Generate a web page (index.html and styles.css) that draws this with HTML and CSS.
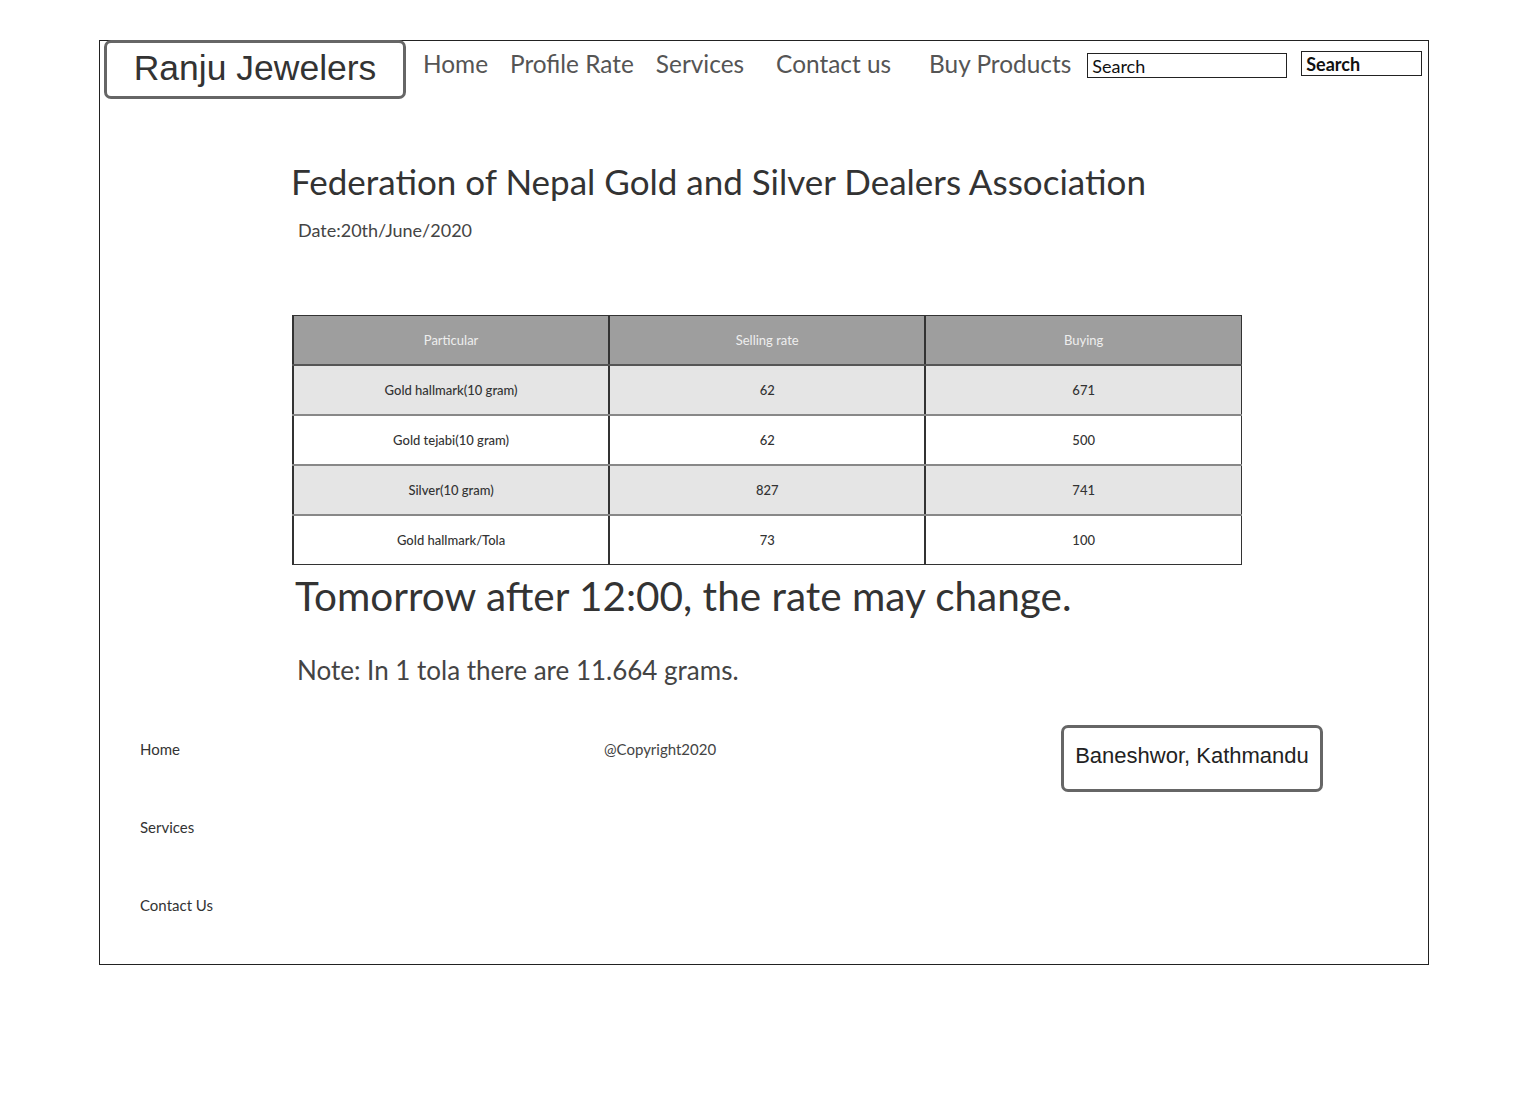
FILE: index.html
```html
<!DOCTYPE html>
<html lang="en">
<head>
    <meta charset="UTF-8">
    <meta name="viewport" content="width=device-width, initial-scale=1.0">
    <title>Ranju Jewelers</title>
    <link rel="stylesheet" href="styles.css">
</head>
<body>
    <div class="frame">
        <div class="header">
            <div class="logo">Ranju Jewelers</div>
            <a class="nav home">Home</a>
            <a class="nav rate">Profile Rate</a>
            <a class="nav services">Services</a>
            <a class="nav contact">Contact us</a>
            <a class="nav buy">Buy Products</a>
            <input type="text" class="searchBox" value="Search">
            <button class="searchButton">Search</button>
        </div>

        <div class="content">
            <h1>Federation of Nepal Gold and Silver Dealers Association</h1>
            <div class="date">Date:20th/June/2020</div>

            <table class="rates">
                <tr>
                    <th>Particular</th>
                    <th>Selling rate</th>
                    <th>Buying</th>
                </tr>
                <tr class="odd">
                    <td>Gold hallmark(10 gram)</td>
                    <td>62</td>
                    <td>671</td>
                </tr>
                <tr>
                    <td>Gold tejabi(10 gram)</td>
                    <td>62</td>
                    <td>500</td>
                </tr>
                <tr class="odd">
                    <td>Silver(10 gram)</td>
                    <td>827</td>
                    <td>741</td>
                </tr>
                <tr>
                    <td>Gold hallmark/Tola</td>
                    <td>73</td>
                    <td>100</td>
                </tr>
            </table>

            <div class="warning">Tomorrow after 12:00, the rate may change.</div>
            <div class="note">Note: In 1 tola there are 11.664 grams.</div>
        </div>

        <div class="footer">
            <div class="links">
                <a>Home</a>
                <a>Services</a>
                <a>Contact Us</a>
            </div>
            <div class="copyright">@Copyright2020</div>
            <div class="address">Baneshwor, Kathmandu</div>
        </div>
    </div>
</body>
</html>
```

FILE: styles.css
```css
*{
    box-sizing: border-box;
    font-family: Lato, "Noto Sans", sans-serif;
}
body{
    margin: 0;
    background-color: white;
    color: #333;
}
.frame{
    margin: 40px 0 0 99px;
    width: 1330px;
    height: 925px;
    border: 1px solid #222;
}

/* header */
.header{
    display: flex;
    align-items: flex-start;
    height: 58px;
    margin-top: -1px;
    padding-left: 4px;
}
.header > *{
    flex-shrink: 0;
    white-space: nowrap;
}
.logo{
    width: 302px;
    height: 59px;
    border: 3px solid #666;
    border-radius: 7px;
    font-family: "Liberation Sans", Arial, sans-serif;
    font-size: 35.5px;
    line-height: 50px;
    text-align: center;
    color: #333;
}
.nav{
    color: #555;
    font-size: 24.4px;
    line-height: 30px;
    margin-top: 9px;
    cursor: pointer;
}
.home{ margin-left: 17px; }
.rate{ margin-left: 22px; }
.services{ margin-left: 22px; }
.contact{ margin-left: 32px; }
.buy{ margin-left: 38px; }
.searchBox{
    width: 200px;
    height: 25px;
    margin: 13px 0 0 16px;
    border: 1px solid #222;
    border-radius: 0;
    padding: 0 4px;
    font-size: 18px;
    color: #111;
}
.searchButton{
    width: 121px;
    height: 25px;
    margin: 11px 0 0 14px;
    border: 1px solid #222;
    background-color: white;
    padding: 0 4px;
    text-align: left;
    font-size: 18px;
    font-weight: bold;
    color: #111;
}

/* rates */
.content{
    padding-left: 191px;
}
h1{
    margin: 61px 0 0 0;
    font-size: 35px;
    line-height: 44px;
    font-weight: normal;
    color: #333;
}
.date{
    margin: 15px 0 0 7px;
    font-size: 18px;
    line-height: 24px;
    color: #444;
}
.rates{
    margin: 73px 0 0 1px;
    width: 950px;
    border-collapse: collapse;
    table-layout: fixed;
    border: 1px solid #333;
}
.rates th, .rates td{
    height: 50px;
    text-align: center;
    font-size: 13px;
    border-left: 2px solid #333;
    border-bottom: 2px solid #888;
}
.rates th{
    height: 49px;
    background-color: #9e9e9e;
    color: #eee;
    font-weight: normal;
    border-bottom-color: #555;
}
.rates td{
    color: #333;
    font-weight: 500;
}
.rates tr:last-child td{
    border-bottom: 1px solid #333;
}
.rates .odd td{
    background-color: #e5e5e5;
}
.warning{
    margin: 4px 0 0 4px;
    font-size: 40.5px;
    line-height: 54px;
    color: #333;
}
.note{
    margin: 31px 0 0 6px;
    font-size: 26px;
    line-height: 32px;
    color: #444;
}

/* footer */
.footer{
    display: flex;
    align-items: flex-start;
    margin-top: 39px;
    padding-left: 40px;
}
.links{
    display: flex;
    flex-direction: column;
    gap: 60px;
    width: 464px;
    padding-top: 15px;
}
.links a{
    font-size: 15px;
    line-height: 18px;
    color: #333;
}
.copyright{
    width: 457px;
    padding-top: 15px;
    font-size: 15px;
    line-height: 18px;
    color: #444;
}
.address{
    width: 262px;
    height: 67px;
    border: 3px solid #666;
    border-radius: 7px;
    font-family: "Liberation Sans", Arial, sans-serif;
    font-size: 22px;
    line-height: 56px;
    text-align: center;
    color: #222;
}
```
